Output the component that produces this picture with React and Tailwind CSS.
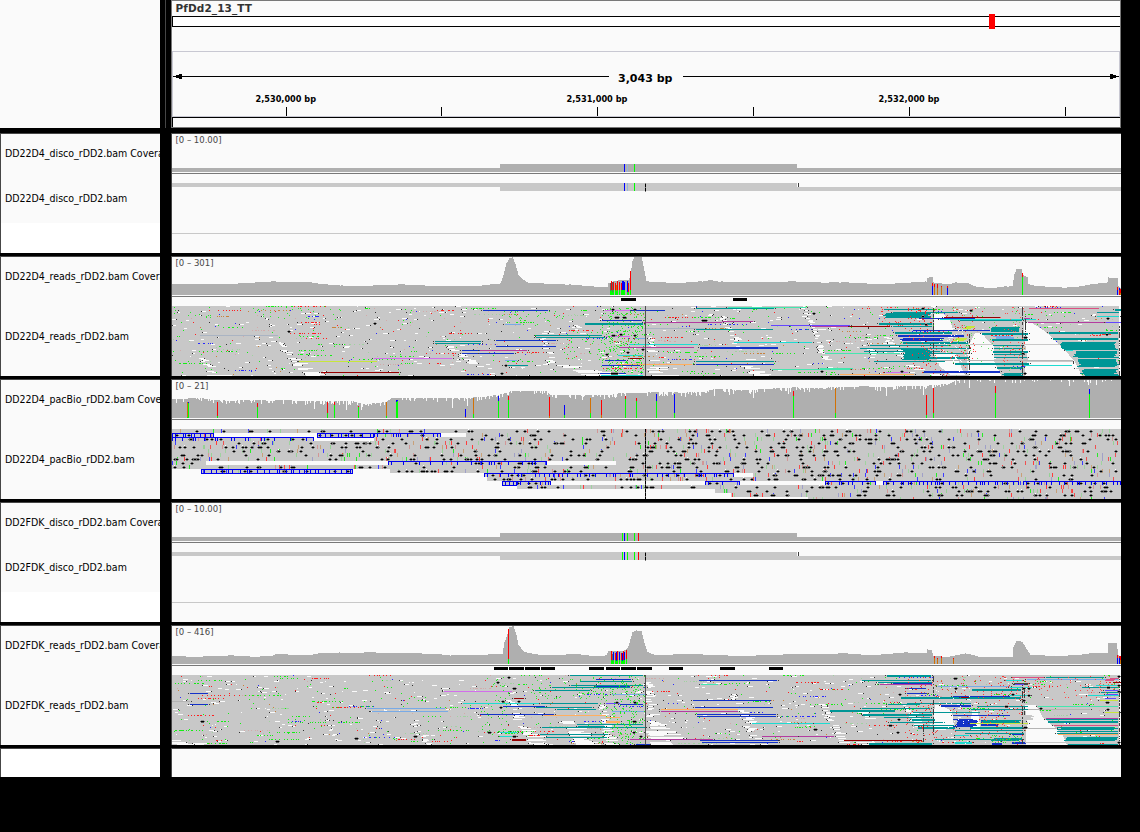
import React from "react";

const C = {
  t: "#009696", b: "#1432c8", m: "#b43ca0", r: "#960000", l: "#78aae6", o: "#ffaf5f",
  c: "#1edcd2", a: "#46e6af", p: "#6446ff", v: "#d26eeb", k: "#dc5082", y: "#c8e63c",
  w: "#fafafa", g: "#c8c8c8", d: "#b4b4b4", s: "#aab4c3", n: "#464646",
};

function rng(seed) {
  let s = seed;
  return () => {
    s = (s * 1664525 + 1013904223) >>> 0;
    return s / 4294967296;
  };
}

/* Collects pixel rectangles per colour and emits one path for each run of a colour. */
function layer() {
  const runs = [];
  return {
    add(x, y, w, h, color) {
      const X = Math.max(172, Math.round(x));
      const W = Math.min(1121, Math.round(x + w)) - X;
      if (W <= 0) return;
      const cmd = `M${X} ${Math.floor(y)}h${W}v${h}h${-W}z`;
      const last = runs[runs.length - 1];
      if (last && last[0] === color) last[1].push(cmd);
      else runs.push([color, [cmd]]);
    },
    render() {
      return runs.map(([c, d], i) => <path key={i} fill={c} d={d.join("")} />);
    },
  };
}

function Coverage({ points, bars, seed, notch = 0 }) {
  const rand = rng(seed);
  let d = "M172 39";
  let jit = 0;
  let i = 0;
  for (let x = 172; x < 1121; x++) {
    while (i < points.length - 2 && points[i + 1][0] <= x) i++;
    const [x0, y0] = points[i];
    const [x1, y1] = points[i + 1];
    const y = y0 + ((y1 - y0) * (x - x0)) / (x1 - x0);
    if (rand() < 0.06) jit = rand() < 0.5 ? 0 : 0.6;
    const cut = notch && rand() < 0.3 ? Math.round(rand() * (rand() < 0.12 ? 10 : notch)) : 0;
    d += `V${Math.max(1, Math.round(y - jit) + cut)}h1`;
  }
  d += "V39z";
  return (
    <g>
      <path d={d} fill="#afafaf" />
      {bars.map(([x, top, split, c1, c2], k) => (
        <g key={k}>
          <rect x={x} y={top} width="1" height={split - top} fill={c1} />
          <rect x={x} y={split} width="1" height={39 - split} fill={c2} />
        </g>
      ))}
      <rect x="171" y="40" width="950" height="1" fill="#787878" />
    </g>
  );
}

const R = "#ff0000", G = "#00ff00", B = "#0000ff", O = "#d17105";

function addBackground(L, rand, spec) {
  for (let i = 0; i < 460; i++) {
    const x = 172 + rand() * 935, y = 50 + Math.floor(rand() * 70);
    const w = 1 + Math.floor(rand() * 5);
    L.add(x, y, w, 1, C.w);
    if (rand() < 0.55) L.add(x + (rand() < 0.5 ? -1 : w), y, 1, 1, "#323232");
  }
  const colors = ["#14f014", "#14f014", "#14f014", "#14f014", "#ff1e1e", "#ff1e1e", "#2828ff", "#c8823c", "#a0d2a0", "#d2aaaa", "#323232"];
  for (let i = 0; i < 560; i++) {
    L.add(172 + rand() * 945, 50 + Math.floor(rand() * 70), 1, 1, colors[Math.floor(rand() * 11)]);
  }
  for (let i = 0; i < 150; i++) {
    const y = 50 + Math.floor(rand() * 70), x = 172 + rand() * 935;
    const c = colors[Math.floor(rand() * 10)];
    const n = 2 + Math.floor(rand() * 9);
    for (let j = 0, xx = x; j < n; j++, xx += 2 + Math.floor(rand() * 4)) L.add(xx, y, rand() < 0.25 ? 2 : 1, 1, c);
  }
  spec.hot.forEach(([x0, x1, y0, y1, n, c]) => {
    for (let i = 0; i < n; i++) L.add(x0 + rand() * (x1 - x0), y0 + rand() * (y1 - y0), 1, 1, c);
  });
}

/* Stepped gap between stacks of reads: slides from (x0,y0) to (x1,y1), widening from w0 to w1. */
function addGap(L, rand, [x0, y0, x1, y1, w0, w1]) {
  for (let y = y0; y <= y1; y++) {
    const f = (y - y0) / Math.max(1, y1 - y0);
    if (rand() < (w0 + (w1 - w0) * f > 12 ? 0.38 : 0.52)) continue;
    const x = x0 + (x1 - x0) * f - 2 + rand() * 5, w = (w0 + (w1 - w0) * f) * (0.5 + rand() * 0.8);
    L.add(x, y, w, 1, C.w);
    if (rand() < 0.5) L.add(x - 1, y, 1, 1, "#3c3c3c");
    if (rand() < 0.3) L.add(x + w, y, 1, 1, "#3c3c3c");
  }
}

function Reads({ spec }) {
  const rand = rng(spec.seed);
  const L = layer();
  L.add(172, 50, 949, 70, C.g);
  addBackground(L, rand, spec);
  spec.gaps.forEach((g) => addGap(L, rand, g));
  spec.voids.forEach((v) => {
    for (let y = v[0][2]; y < v[v.length - 1][2]; y++) {
      let k = 0;
      while (k < v.length - 2 && v[k + 1][2] <= y) k++;
      const f = (y - v[k][2]) / (v[k + 1][2] - v[k][2]);
      const a = v[k][0] + (v[k + 1][0] - v[k][0]) * f, b = v[k][1] + (v[k + 1][1] - v[k][1]) * f;
      L.add(a, y, b - a, 1, C.w);
    }
  });
  spec.lines.forEach(([a, b, y, c, h = 1]) => {
    if (h > 2) {
      for (let k = 0; k < h; k++) L.add(a + (rand() * 5), y + k, b - a - 4, 1, C[c]);
    } else {
      L.add(a, y, b - a, h, C[c]);
      if (rand() < 0.6) L.add(a - 2, y, 1, 1, "#3c3c3c");
      if (rand() < 0.6) L.add(b + 1, y, 1, 1, "#3c3c3c");
    }
  });
  spec.over.forEach(([x0, x1, y0, y1, n, c]) => {
    for (let i = 0; i < n; i++) L.add(x0 + rand() * (x1 - x0), y0 + rand() * (y1 - y0), 1, 1, c);
  });
  spec.dashes.forEach(([x, y0, y1]) => {
    for (let y = y0; y < y1; y++) if (rand() < 0.68) L.add(x, y, 1, 1, "#3c3c3c");
  });
  spec.blobs.forEach(([x, y, w = 2]) => {
    L.add(x - 1, y, w + 2, 1, "#6e6e6e");
    L.add(x, y - 1, w, 1, "#969696");
    L.add(x, y, w, 1, "#000000");
    L.add(x, y + 1, w, 1, "#5a5a5a");
  });
  return (
    <g>
      {L.render()}
      <rect x="645" y="50" width="1" height="70" fill="#505050" />
    </g>
  );
}

const readsA = {
  seed: 41,
  hot: [[600, 645, 51, 119, 190, "#28eb28"], [565, 605, 75, 105, 45, "#28eb28"], [500, 560, 55, 70, 40, "#28eb28"], [880, 930, 51, 70, 70, "#ff3232"], [920, 975, 51, 119, 130, "#f03c3c"], [172, 340, 52, 64, 35, "#28eb28"]],
  gaps: [
    [264, 58, 270, 72, 1, 3], [200, 100, 209, 116, 4, 11], [203, 116, 207, 119, 18, 20], [278, 86, 288, 103, 5, 8], [288, 103, 306, 119, 8, 17],
    [440, 80, 450, 92, 3, 7], [450, 93, 478, 112, 6, 11], [540, 82, 549, 106, 4, 7], [549, 106, 585, 119, 12, 38], [572, 65, 580, 80, 3, 7], [645, 72, 650, 90, 2, 5],
    [646, 90, 652, 108, 8, 12], [646, 108, 652, 119, 15, 24], [720, 60, 733, 84, 3, 6], [733, 86, 745, 104, 5, 9], [738, 107, 752, 119, 8, 16],
    [801, 50, 808, 66, 3, 5], [808, 67, 820, 94, 3, 6], [817, 94, 830, 113, 4, 8], [858, 83, 874, 100, 3, 6], [882, 80, 900, 100, 5, 10], [905, 109, 930, 119, 10, 20],
  ],
  voids: [
    [[934, 944, 58], [934, 950, 64], [934, 953, 74]], [[934, 956, 98], [940, 961, 110], [951, 965, 119]],
    [[975, 982, 77], [971, 988, 84], [969, 994, 90], [967, 994, 105], [969, 1002, 120]],
    [[1024, 1031, 66], [1024, 1044, 74], [1024, 1053, 82], [1026, 1063, 92], [1028, 1074, 104], [1025, 1078, 112], [1025, 1082, 120]],
    [[1119, 1121, 50], [1119, 1121, 120]],
  ],
  lines: [
    [200, 278, 79, "s"], [435, 481, 85, "t"], [435, 481, 87, "t"], [299, 377, 105, "y"], [321, 399, 116, "r"], [374, 452, 102, "v"],
    [462, 514, 94, "b"], [462, 514, 97, "b"], [483, 548, 54, "b"], [505, 521, 68, "l"], [585, 643, 67, "t", 2], [602, 642, 64, "b"],
    [536, 602, 79, "t"], [536, 605, 81, "t"], [606, 630, 80, "v"], [627, 665, 54, "b"], [605, 630, 54, "v"], [496, 556, 84, "b"], [496, 556, 90, "b"], [480, 527, 94, "m"], [480, 514, 97, "b"],
    [504, 528, 109, "t"], [505, 517, 104, "l"], [696, 774, 52, "t"], [728, 806, 51, "a"], [644, 722, 66, "m"], [722, 753, 65, "m"], [644, 704, 72, "s"], [696, 773, 73, "t"], [771, 850, 69, "p"],
    [635, 645, 82, "l"], [629, 698, 88, "c"], [620, 694, 91, "m"], [700, 778, 91, "b", 2], [734, 812, 86, "c"], [618, 643, 99, "c"], [605, 626, 104, "b"], [630, 642, 102, "r"], [602, 640, 109, "b"],
    [617, 692, 108, "o"], [696, 774, 105, "t"], [696, 774, 108, "b"], [772, 850, 113, "a"], [601, 643, 119, "c"], [600, 626, 117, "b"],
    [812, 890, 70, "r"], [812, 848, 70, "m"], [800, 812, 86, "c"], [884, 932, 53, "t"], [893, 958, 56, "t"], [883, 932, 57, "t", 5], [919, 975, 62, "b"], [944, 1000, 61, "r"], [960, 1022, 64, "t"], [940, 1036, 63, "c"],
    [879, 932, 67, "t", 2], [893, 932, 70, "t"], [913, 990, 74, "b"], [962, 974, 70, "y", 3], [990, 1022, 71, "t", 5], [895, 952, 76, "t", 2], [898, 964, 79, "b", 2], [899, 944, 82, "b", 3], [951, 966, 82, "y", 3], [982, 1028, 77, "t", 2], [992, 1014, 80, "l", 5], [992, 1028, 83, "t", 2],
    [903, 968, 86, "t", 2], [870, 948, 89, "t"], [860, 969, 92, "t"], [864, 940, 95, "t"], [901, 932, 92, "t", 12], [825, 900, 97, "a"], [905, 970, 97, "t"], [920, 969, 101, "t", 2],
    [993, 1022, 89, "t"], [994, 1022, 92, "t"], [993, 1028, 95, "t", 2], [994, 1023, 98, "t"], [994, 1027, 101, "t"], [962, 1026, 104, "t"], [874, 945, 105, "t"], [955, 1029, 107, "t", 2], [997, 1023, 111, "t", 2], [924, 1000, 115, "b", 2], [1001, 1024, 117, "t", 3],
    [932, 1084, 88, "g"], [932, 1073, 104, "d"], [1022, 1074, 105, "g"], [1022, 1072, 109, "c"], [820, 853, 112, "a"], [840, 914, 118, "o"], [886, 908, 116, "v"],
    [1029, 1099, 52, "k"], [1024, 1030, 62, "m"], [1028, 1119, 66, "m"], [1106, 1121, 66, "p"], [1097, 1119, 60, "c"], [1097, 1119, 56, "t"], [1115, 1121, 53, "t", 2],
    [1049, 1118, 76, "t", 2], [1060, 1118, 79, "g", 2], [1053, 1118, 82, "t", 2], [1060, 1118, 86, "t", 8], [1066, 1118, 94, "c"], [1073, 1118, 95, "t", 7], [1076, 1118, 103, "t", 8], [1080, 1118, 113, "t", 7], [1076, 1118, 112, "g"], [1073, 1118, 94, "g"],
  ],
  over: [[606, 643, 52, 117, 110, "#1eeb1e"], [905, 932, 52, 118, 45, "#ff2828"], [938, 970, 73, 119, 50, C.w], [920, 975, 85, 103, 35, "#ff3c3c"], [1090, 1110, 78, 80, 18, "#ff3232"], [1000, 1024, 51, 110, 40, "#ff5050"], [950, 1020, 51, 119, 50, "#64dc64"]],
  dashes: [[933, 51, 103], [1022, 51, 119], [1025, 60, 80], [969, 78, 119], [1119, 68, 120], [1073, 105, 110]],
  blobs: [[374, 67], [288, 75], [615, 61, 4], [623, 61, 3], [612, 53], [634, 53], [612, 79, 3], [620, 78], [634, 79], [702, 64, 5], [627, 96], [606, 98], [642, 93], [611, 117, 7], [505, 109], [501, 117], [922, 52], [922, 60], [813, 57], [1024, 81, 3], [1024, 117], [1022, 97], [1107, 62], [1106, 78], [925, 68], [970, 54], [901, 115], [821, 115]],
};

const readsB = {
  seed: 907,
  hot: [[600, 645, 51, 119, 170, "#28eb28"], [480, 510, 52, 110, 50, "#28eb28"], [530, 600, 52, 75, 60, "#28eb28"], [905, 935, 51, 119, 60, "#ff3232"], [935, 1010, 51, 119, 130, "#f03c3c"], [1000, 1025, 51, 90, 35, "#ff3232"]],
  gaps: [
    [172, 115, 174, 119, 10, 20], [192, 117, 196, 119, 12, 14], [326, 90, 331, 110, 1, 4], [413, 95, 424, 119, 3, 7], [508, 75, 515, 95, 4, 10], [516, 100, 532, 119, 6, 24],
    [600, 80, 606, 119, 5, 12], [645, 57, 648, 90, 5, 10], [646, 84, 650, 104, 6, 16], [646, 104, 652, 119, 24, 28], [730, 68, 738, 82, 3, 8], [738, 85, 750, 100, 6, 10], [744, 100, 758, 119, 6, 12],
    [818, 74, 826, 92, 4, 8], [828, 94, 842, 119, 5, 11], [858, 85, 865, 95, 8, 12], [900, 75, 916, 100, 4, 8], [560, 96, 575, 119, 14, 20], [850, 116, 860, 119, 14, 18],
  ],
  voids: [
    [[935, 942, 80], [934, 952, 86], [934, 954, 102], [936, 942, 105]], [[972, 978, 86], [970, 980, 100], [972, 980, 106]],
    [[1025, 1036, 80], [1026, 1043, 92], [1028, 1050, 98], [1026, 1057, 104], [1026, 1063, 110], [1026, 1067, 120]],
    [[1119, 1121, 50], [1119, 1121, 120]],
  ],
  lines: [
    [190, 208, 68, "b"], [190, 208, 79, "b"], [172, 190, 76, "d"], [367, 445, 83, "l"], [372, 448, 86, "l"], [444, 512, 66, "v"], [463, 540, 78, "c"], [480, 554, 89, "b"],
    [570, 643, 50, "t"], [580, 632, 56, "t"], [596, 631, 54, "b"], [571, 643, 60, "t"], [552, 630, 62, "t"], [596, 630, 61, "b"], [535, 590, 65, "t"], [514, 524, 73, "r"],
    [612, 645, 69, "l"], [541, 598, 78, "t"], [606, 620, 78, "p"], [620, 643, 79, "b"], [503, 545, 81, "b"], [536, 592, 82, "t"], [557, 596, 84, "t"], [612, 644, 86, "l"], [544, 606, 90, "o"], [606, 620, 92, "o"], [606, 620, 96, "o", 2],
    [577, 643, 99, "t"], [578, 605, 101, "t"], [542, 645, 102, "t"], [540, 608, 109, "t"], [546, 607, 112, "t"], [500, 517, 107, "c"], [500, 516, 111, "c"], [512, 526, 114, "r", 2], [630, 713, 114, "m"], [636, 650, 119, "b"], [700, 778, 115, "b"], [702, 778, 117, "b"],
    [699, 777, 55, "b"], [701, 718, 59, "a"], [693, 771, 75, "b"], [695, 773, 82, "b"], [661, 738, 84, "o"], [661, 738, 86, "m"], [697, 776, 89, "b"], [697, 776, 91, "b"], [752, 830, 98, "c"], [762, 832, 111, "m"],
    [887, 931, 50, "t", 2], [862, 931, 55, "t"], [878, 932, 57, "t"], [880, 932, 59, "m"], [893, 932, 58, "b"], [907, 926, 63, "b"], [907, 927, 68, "b"], [938, 1010, 61, "l"], [972, 1021, 64, "t", 2], [953, 1010, 71, "b"],
    [901, 1021, 72, "t", 2], [961, 969, 72, "r"], [888, 920, 79, "t"], [907, 971, 78, "t"], [941, 971, 80, "b", 2], [977, 1028, 81, "t"], [862, 930, 83, "t"], [971, 1032, 84, "t"], [830, 895, 85, "t", 2], [913, 980, 87, "t"], [863, 932, 89, "t", 2], [884, 930, 92, "t"],
    [912, 935, 94, "t", 2], [953, 1010, 90, "b"], [953, 977, 94, "b", 8], [980, 1001, 95, "b", 6], [980, 1022, 95, "t", 3], [890, 945, 97, "t"], [970, 1028, 98, "y"], [914, 954, 100, "t"], [918, 955, 102, "t", 2], [970, 1023, 102, "t", 2], [955, 1023, 105, "t"], [965, 1024, 108, "t"],
    [955, 969, 110, "c"], [990, 1022, 113, "t", 3], [935, 1022, 114, "t"], [955, 972, 117, "c", 2], [844, 922, 115, "r"], [869, 932, 118, "t", 2], [992, 1002, 118, "b", 2], [1012, 1026, 117, "b", 2], [1012, 1022, 109, "b"], [800, 812, 98, "c"], [800, 834, 111, "m"],
    [1013, 1044, 52, "k"], [1046, 1104, 52, "t"], [1027, 1118, 54, "l"], [1006, 1022, 55, "c"], [1014, 1028, 58, "n", 2], [1015, 1024, 59, "p"], [1010, 1032, 62, "c"], [1010, 1030, 70, "c"], [1082, 1118, 62, "t"], [1105, 1118, 53, "k", 3], [1113, 1121, 57, "r"],
    [1096, 1119, 60, "c"], [1105, 1118, 65, "p"], [1101, 1119, 67, "t"], [1106, 1118, 69, "p"], [1088, 1119, 70, "c"], [1105, 1116, 73, "p"], [1100, 1118, 75, "y"], [1038, 1118, 81, "a"], [1028, 1090, 84, "d"], [1105, 1119, 87, "y"],
    [1025, 1056, 103, "d"], [1013, 1034, 90, "g", 5], [1046, 1118, 94, "t"], [1048, 1118, 96, "t", 2], [1046, 1118, 93, "m"], [1054, 1118, 100, "k"], [1057, 1118, 102, "t", 3], [1057, 1118, 106, "t"], [1057, 1118, 108, "t"], [1058, 1118, 109, "o"], [1063, 1118, 112, "t", 4], [1025, 1118, 117, "g"], [1068, 1118, 119, "t"],
  ],
  over: [[612, 640, 55, 115, 100, "#1eeb1e"], [905, 932, 52, 118, 35, "#ff2828"], [975, 1022, 55, 119, 60, "#ff3c3c"], [990, 1022, 110, 118, 35, "#32dc32"], [1025, 1118, 51, 75, 55, "#ff4646"], [935, 970, 60, 119, 35, C.w]],
  dashes: [[933, 51, 110], [1022, 60, 119], [1024, 62, 90], [1119, 50, 120], [923, 100, 118]],
  blobs: [[201, 96, 3], [276, 116, 3], [355, 113, 3], [414, 111, 3], [508, 52], [497, 57], [513, 63, 3], [502, 76], [518, 76, 2], [500, 82], [488, 107, 3], [513, 111, 3], [616, 77], [634, 77], [633, 96, 3], [633, 107], [640, 111], [954, 53, 3], [955, 63], [899, 69], [898, 94], [889, 100, 3], [897, 107], [814, 104, 3], [1005, 81, 3], [1023, 63], [1028, 63], [1028, 70], [1023, 75], [1107, 62, 3], [1106, 77, 3], [1118, 60], [1118, 66], [1118, 51], [1107, 84], [1024, 102, 3], [1012, 69], [1040, 83], [1118, 117]],
};

const coverA = [[172, 28], [210, 29], [240, 28], [272, 26], [310, 27], [345, 30], [400, 29], [450, 30], [480, 30], [500, 28], [503, 20], [506, 8], [509, 3], [512, 1], [515, 8], [518, 19], [522, 23], [528, 27], [560, 28], [580, 30], [607, 31], [608, 27], [618, 25], [628, 25], [630, 20], [632, 6], [634, 1], [641, 1], [644, 16], [646, 26], [670, 27], [700, 26], [710, 24], [720, 26], [760, 27], [790, 26], [850, 27], [880, 29], [912, 27], [926, 26], [927, 22], [932, 22], [933, 27], [948, 29], [955, 27], [968, 28], [975, 31], [990, 33], [1012, 30], [1014, 18], [1016, 13], [1021, 13], [1022, 18], [1027, 22], [1028, 29], [1050, 31], [1074, 32], [1090, 29], [1107, 27], [1108, 22], [1117, 23], [1118, 31], [1121, 33]];
const coverB = [[172, 31], [200, 32], [230, 31], [270, 32], [275, 30], [310, 30], [320, 28], [395, 28], [420, 29], [460, 31], [490, 30], [502, 30], [504, 18], [506, 12], [509, 2], [513, 1], [516, 10], [518, 20], [524, 27], [540, 30], [580, 30], [595, 32], [606, 31], [608, 27], [625, 26], [628, 22], [632, 8], [636, 6], [641, 6], [644, 18], [647, 27], [655, 30], [690, 29], [740, 31], [770, 30], [795, 29], [812, 30], [840, 29], [850, 29], [870, 31], [905, 28], [926, 29], [927, 25], [931, 25], [933, 31], [950, 32], [965, 29], [980, 32], [1012, 32], [1013, 22], [1016, 17], [1022, 17], [1025, 22], [1030, 30], [1060, 31], [1090, 29], [1107, 29], [1108, 19], [1116, 19], [1118, 30], [1121, 34]];
const coverP = [[172, 20], [205, 20], [214, 21], [235, 22], [236, 22], [352, 22], [362, 25], [378, 24], [385, 23], [390, 20], [480, 19], [500, 16], [510, 13], [546, 12], [550, 16], [610, 16], [620, 14], [700, 14], [714, 10], [750, 11], [780, 9], [822, 9], [824, 10], [828, 8], [900, 8], [932, 7], [950, 5], [956, 2], [975, 1], [1121, 0]];

const barsA = [
  ...[611, 613, 615, 617, 619, 621, 623, 624].map((x, i) => [x, 25 + (i % 3), 34, i > 5 ? B : R, G]),
  [610, 27, 35, "#646464", G], [612, 26, 36, "#646464", G], [616, 29, 35, O, G], [622, 25, 34, B, G], [627, 25, 36, B, G], [628, 27, 36, R, G], [630, 15, 34, R, G],
  [932, 27, 30, R, B], [934, 28, 31, R, O], [937, 28, 32, R, O], [941, 30, 31, R, O], [947, 30, 32, R, B], [1022, 17, 21, R, G], [1117, 31, 34, R, B], [1119, 32, 34, B, R], [1120, 33, 37, R, O],
];
const barsB = [
  [508, 4, 34, R, G], ...[611, 613, 615, 617, 619, 621, 623, 624].map((x, i) => [x, 26 + (i % 3), 35, i % 3 === 1 ? B : R, G]),
  [612, 29, 36, "#646464", G], [616, 27, 36, B, G], [622, 28, 36, B, G], [626, 25, 34, R, G],
  [934, 31, 33, R, O], [937, 33, 34, R, O], [941, 31, 33, R, O], [953, 33, 34, R, O], [1117, 30, 33, R, B], [1119, 31, 33, R, B], [1120, 31, 35, R, O],
];
const barsP = [
  [187, 23, 38, O, G], [188, 23, 24, B, G], [217, 23, 37, R, G], [257, 24, 28, R, G], [327, 23, 34, R, G], [334, 23, 26, R, G], [358, 27, 28, R, G], [386, 23, 37, O, G], [396, 21, 23, B, G], [397, 21, 22, B, G], [465, 30, 38, B, O], [473, 19, 35, O, G],
  [498, 17, 22, B, G], [508, 17, 21, R, G], [549, 18, 37, R, O], [564, 26, 36, B, G], [590, 19, 34, O, G], [601, 21, 36, R, O], [625, 17, 20, R, G], [636, 19, 22, R, G], [656, 15, 22, B, G], [674, 15, 34, B, G], [793, 12, 17, R, G],
  [835, 9, 34, O, G], [926, 16, 36, R, G], [933, 9, 34, R, G], [995, 7, 14, R, G], [1089, 10, 15, B, G],
];

function LongReads() {
  const rand = rng(77);
  const L = layer();
  L.add(172, 50, 949, 40, C.g);
  const rows = [
    [[172, 1121]],
    [[172, 214], [317, 441], [466, 1121]],
    [[172, 314], [374, 1121]],
    [[172, 1121]], [[172, 1121]], [[172, 1121]], [[172, 1121]], [[172, 1121]],
    [[172, 206], [388, 547], [616, 1121]],
    [[172, 1121]],
    [[201, 353], [390, 1121]],
    [[484, 734], [753, 1121]],
    [[487, 1121]],
    [[502, 551], [705, 740], [825, 876], [883, 1121]],
    [[517, 1121]], [[715, 1121]], [[731, 1121]], [[808, 1121]],
  ];
  const ticks = ["#28eb28", "#ff3c3c", "#3c3cff", "#96d296", "#d29696", "#a0a0c8", "#c8a078", "#a0d2a0", "#f05050"];
  rows.forEach((parts, r) => {
    const y = 50 + r * 4, h = r === 17 ? 2 : 4;
    L.add(172, y, 949, h, C.w);
    parts.forEach(([a, b]) => L.add(a, y, b - a, h, C.g));
    parts.forEach(([a, b]) => {
      const n = Math.round((b - a) / 17);
      for (let i = 0; i < n; i++) L.add(a + rand() * (b - a - 2), y, 1, h, ticks[Math.floor(rand() * ticks.length)]);
      if (r === 17) return;
      const m = Math.round((b - a) / 18);
      for (let i = 0; i < m; i++) {
        const x = a + 2 + Math.floor(rand() * (b - a - 7)), w = rand() < 0.12 ? 4 : 2;
        L.add(x - 1, y + 2, w + 2, 1, "#6e6e6e");
        L.add(x, y + 1, w, 1, "#787878");
        L.add(x, y + 2, w, 1, "#000000");
        L.add(x, y + 3, w, 1, "#828282");
        if (rand() < 0.15) L.add(x, y, 1, 1, "#ffffff");
      }
    });
  });
  const outlines = [
    [172, 214, 54, 1], [317, 374, 54, 1], [374, 441, 54, 0], [172, 314, 58, 0], [388, 547, 82, 0], [201, 353, 90, 1],
    [484, 734, 94, 0], [502, 517, 102, 1], [517, 551, 102, 0], [705, 740, 102, 0], [825, 876, 102, 0], [883, 1019, 102, 0], [1023, 1121, 102, 0],
  ];
  outlines.forEach(([a, b, y, closed]) => {
    L.add(a, y, b - a, 1, "#0000f0");
    L.add(a, y, 1, 4, "#0000f0");
    L.add(b - 1, y, 1, 4, "#0000f0");
    if (closed) L.add(a, y + 4, b - a, 1, "#0000f0");
    for (let x = a + 3; x < b - 2; x += 2 + Math.floor(rand() * (a > 880 || closed ? 7 : 15))) L.add(x, y, 1, 4, "#0000f0");
  });
  return (
    <g>
      {L.render()}
      <path d="M645.5 50V120" stroke="#505050" />
      <path d="M645.5 50V120" stroke="#000" strokeDasharray="3 1" />
    </g>
  );
}

function Contigs({ marks }) {
  return (
    <g>
      <path fill="#afafaf" d="M171 35H500V31H797V35H1121V39H171z" />
      <rect x="171" y="40" width="950" height="1" fill="#787878" />
      <path fill="#c8c8c8" d="M171 50H797V54H1121V58H500V54H171z" />
      {marks.map(([x, c]) => (
        <g key={x} fill={c}>
          <rect x={x} y="31" width="1" height="8" />
          <rect x={x} y="50" width="1" height="8" />
        </g>
      ))}
      <rect x="645" y="50" width="1" height="9" fill="#787878" />
      <path fill="#000" d="M645 51h1v3h-1zM645 55h1v3h-1z" />
      <rect x="797" y="50" width="1" height="4" fill="#fff" />
      <rect x="798" y="50" width="1" height="4" fill="#3c3c3c" />
      <rect x="171" y="100" width="950" height="1" fill="#c8c8c8" />
    </g>
  );
}

function Name({ children }) {
  return (
    <div className="h-4 overflow-hidden pl-1 font-['DejaVu_Sans_Condensed','DejaVu_Sans',sans-serif] text-[10.5px] leading-4 whitespace-nowrap text-black [font-stretch:condensed]">
      {children}
    </div>
  );
}

function Track({ name, range, rangeWidth, short, children }) {
  return (
    <section className="flex h-[120px] shrink-0">
      <div className="flex w-40 shrink-0 flex-col overflow-hidden border-t border-l border-[#464646] bg-[#fafafa]">
        <div className="pt-[11px]"><Name>{name} Coverage</Name></div>
        <div className={short ? "pt-[29px]" : "pt-11"}><Name>{name}</Name></div>
        {short && <div className="mt-auto h-[30px] bg-white" />}
      </div>
      <svg className="ml-[11px] block h-[120px] w-[950px] bg-[#fafafa]" viewBox="171 0 950 120" shapeRendering="crispEdges">
        {children}
        <path d="M171 .5H1121M171.5 0V120" stroke="#464646" />
        <text x="175.5" y="10" fontSize="8" fill="#464646" textLength={rangeWidth} lengthAdjust="spacingAndGlyphs" className="font-['DejaVu_Sans',sans-serif]">{range}</text>
      </svg>
    </section>
  );
}

function Header() {
  return (
    <section className="flex h-32 shrink-0">
      <div className="w-40 shrink-0 bg-[#fafafa]" />
      <div className="ml-[5px] w-px shrink-0 bg-[#464646]" />
      <svg className="ml-[5px] block h-32 w-[950px] bg-[#fafafa]" viewBox="171 0 950 128" shapeRendering="crispEdges">
        <path d="M171 .5H1120.5V127.5H171.5V0" fill="none" stroke="#787878" />
        <path d="M1120 16.5H172.5V26.5H1120" fill="#fff" stroke="#000" />
        <rect x="989" y="14" width="6" height="15" fill="#f00" />
        <rect x="172.5" y="51.5" width="947" height="65" fill="none" stroke="#c8c8d2" />
        <path d="M174 76.5H609M683 76.5H1119M286.5 107V116M441.5 107V116M597.5 107V116M753.5 107V116M909.5 107V116M1065.5 107V116" stroke="#000" />
        <path d="M173 76.5L182 73.5V79.5zM1119 76.5L1110 73.5V79.5z" fill="#000" />
        <path d="M1120 117.5H172.5V127" fill="none" stroke="#000" />
        <g className="font-['DejaVu_Sans',sans-serif] font-bold">
          <text x="175.5" y="12" fontSize="10.5" fill="#323232" textLength="76.5">PfDd2_13_TT</text>
          <text x="618" y="81.5" fontSize="11" textLength="54.5" lengthAdjust="spacingAndGlyphs">3,043 bp</text>
          <text x="255.5" y="102" fontSize="9.5" textLength="60.5" lengthAdjust="spacingAndGlyphs">2,530,000 bp</text>
          <text x="566.5" y="102" fontSize="9.5" textLength="61" lengthAdjust="spacingAndGlyphs">2,531,000 bp</text>
          <text x="878.5" y="102" fontSize="9.5" textLength="61" lengthAdjust="spacingAndGlyphs">2,532,000 bp</text>
        </g>
      </svg>
    </section>
  );
}

const Marks = ({ list }) => list.map(([x, w]) => <rect key={x} x={x} y="42" width={w} height="3" fill="#000" />);

export default function App() {
  return (
    <main className="h-[832px] w-[1140px] overflow-hidden bg-black">
      <Header />
      <div className="mt-[5px] flex flex-col gap-[3px]">
        <Track name="DD22D4_disco_rDD2.bam" range="[0 – 10.00]" rangeWidth="46" short>
          <Contigs marks={[[624, "#0000ff"], [627, "#96b4dc"], [634, "#00ff00"]]} />
        </Track>
        <Track name="DD22D4_reads_rDD2.bam" range="[0 – 301]" rangeWidth="38">
          <Coverage points={coverA} bars={barsA} seed={5} />
          <Marks list={[[621, 15], [733, 14]]} />
          <Reads spec={readsA} />
        </Track>
        <Track name="DD22D4_pacBio_rDD2.bam" range="[0 – 21]" rangeWidth="33">
          <Coverage points={coverP} bars={barsP} seed={12} notch={4} />
          <LongReads />
        </Track>
        <Track name="DD2FDK_disco_rDD2.bam" range="[0 – 10.00]" rangeWidth="46" short>
          <Contigs marks={[[622, "#00ff00"], [624, "#0000ff"], [627, "#00ff00"], [634, "#00ff00"], [638, "#ff0000"]]} />
        </Track>
        <Track name="DD2FDK_reads_rDD2.bam" range="[0 – 416]" rangeWidth="38">
          <Coverage points={coverB} bars={barsB} seed={9} />
          <Marks list={[[494, 14], [509, 15], [525, 15], [541, 14], [589, 15], [606, 14], [621, 15], [637, 15], [669, 14], [720, 15], [769, 14]]} />
          <Reads spec={readsB} />
        </Track>
        <section className="flex h-[29px] shrink-0">
          <div className="w-40 shrink-0 border-t border-l border-[#464646] bg-white" />
          <div className="ml-[11px] w-[950px] border-t border-l border-[#464646] bg-[#fafafa]" />
        </section>
      </div>
    </main>
  );
}
